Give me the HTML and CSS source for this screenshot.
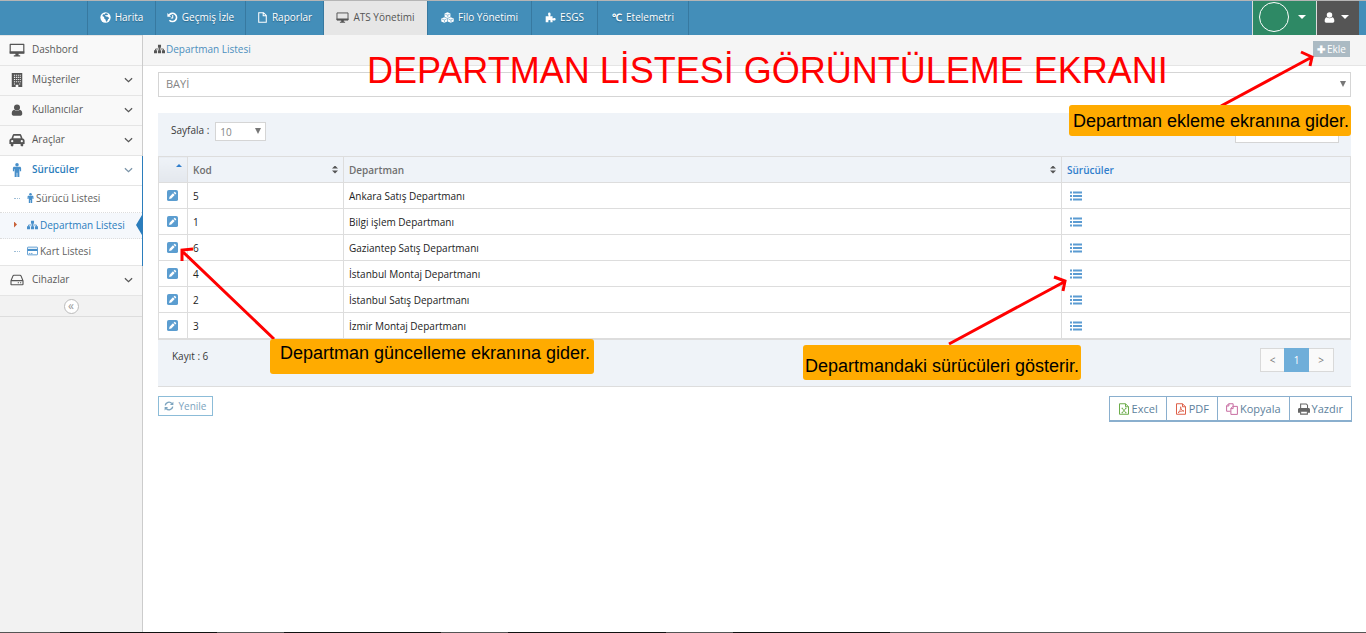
FILE: index.html
```html
<!DOCTYPE html>
<html lang="tr">
<head>
<meta charset="utf-8">
<title>Departman Listesi</title>
<link rel="stylesheet" href="styles.css">
</head>
<body>
<svg class="defs" aria-hidden="true">
  <symbol id="i-globe" viewBox="0 0 16 16"><circle cx="8" cy="8" r="7.5" fill="currentColor"/><path d="M8 1.800l2.600.4 1.200 1.500-1.700 1.200-1.500-.6-1.400 1L9 6.600l2.400.300L13.500 9l-1.800 1.600-1.200 3L8.800 14l-.8-3-1.800-1.600-.2-2-2.600-1.500L4.500 3.200l2 .5z" fill="#3f88b5"/></symbol>
  <symbol id="i-history" viewBox="0 0 16 16"><path d="M3.200 4.200A6 6 0 1 1 3.500 12" fill="none" stroke="currentColor" stroke-width="2.300"/><path d="M.5 1.500V7H6z" fill="currentColor"/><path d="M8.300 4.500v4.200H5.500" fill="none" stroke="currentColor" stroke-width="1.500"/></symbol>
  <symbol id="i-file" viewBox="0 0 16 16"><path d="M2.500 1h7l4 4v10h-11zM9 1v4.500h4.500" fill="none" stroke="currentColor" stroke-width="1.500"/></symbol>
  <symbol id="i-desktop" viewBox="0 0 20 16"><path d="M1.500 1h17v11h-17z" fill="none" stroke="currentColor" stroke-width="1.500" stroke-linejoin="round"/><path d="M1 9.500h18V12H1zM8 12h4v2.500h2V16H6v-1.500h2z" fill="currentColor"/></symbol>
  <symbol id="i-cubes" viewBox="0 0 20 16"><path d="M10 0l4.500 2v5L10 9 5.500 7V2zM5 7.500l4.600 2v4.700L5 16 .4 14.200V9.500zM15 7.500l4.600 2v4.700L15 16l-4.600-1.800V9.500z" fill="currentColor"/><path d="M6.500 3l3.500 1.300L13.500 3M10.500 4.500v3.200M1.500 10.400L5 11.800l3.500-1.400M5.500 12v3M11.500 10.400l3.500 1.400 3.500-1.400M15.500 12v3" fill="none" stroke="#3f88b5" stroke-width=".8"/></symbol>
  <symbol id="i-puzzle" viewBox="0 0 16 16"><path d="M1 6h4.500C4 4 4 .8 6.200.8S8.700 4 7.500 6H11v3.500c2-1.400 4.500-1 4.500 1s-2.500 2.300-4.500 1V15H7.600c1-2 .6-3.300-1.200-3.300S4.400 13 5.200 15H1z" fill="currentColor"/></symbol>
  <symbol id="i-user" viewBox="0 0 16 16"><circle cx="8" cy="4.500" r="4" fill="currentColor"/><path d="M4 7.500c2.500 2 5.500 2 8 0 2.500.8 3 3 3 5.500 0 1.500-.8 2.500-2.300 2.500H3.300C1.800 15.500 1 14.500 1 13c0-2.500.5-4.700 3-5.500z" fill="currentColor"/></symbol>
  <symbol id="i-building" viewBox="0 0 14 16"><path d="M1 0h12v16H8.500v-2.500h-3V16H1z" fill="currentColor"/><path d="M3.500 2.500h8M3.500 5h8M3.500 7.500h8M3.500 10h8M3.500 12.500h1.500M9.500 12.500H11" stroke="#f9f9f9" stroke-width="1.200" stroke-dasharray="1.200 1"/></symbol>
  <symbol id="i-car" viewBox="0 0 20 16"><path d="M3 6l1.500-4C4.900 1 5.500.5 6.700.5h6.600c1.200 0 1.800.5 2.200 1.500L17 6c2 .5 2.500 1.500 2.500 3v4h-1.700v1.500c0 2-3.300 2-3.300 0V13h-9v1.500c0 2-3.300 2-3.300 0V13H.5V9c0-1.500.5-2.500 2.500-3z" fill="currentColor"/><path d="M5.300 5.800h9.400l-1-3H6.300z" fill="#f9f9f9"/><circle cx="4" cy="9.500" r="1.400" fill="#f9f9f9"/><circle cx="16" cy="9.500" r="1.400" fill="#f9f9f9"/></symbol>
  <symbol id="i-male" viewBox="0 0 10 16"><circle cx="5" cy="2" r="2" fill="currentColor"/><path d="M2 4.300h6c1.200 0 1.700.7 1.700 1.700v3.500H8.200V7h-.5v9H5.400v-5h-.8v5H2.300V7h-.5v2.500H.3V6c0-1 .5-1.700 1.700-1.700z" fill="currentColor"/></symbol>
  <symbol id="i-sitemap" viewBox="0 0 18 16"><path d="M6.500 1h5v5h-5zM0 10h5v5H0zM6.500 10h5v5h-5zM13 10h5v5h-5z" fill="currentColor"/><path d="M9 5v6M2.500 11V8h13v3" fill="none" stroke="currentColor" stroke-width="1.400"/></symbol>
  <symbol id="i-card" viewBox="0 0 18 16"><rect x=".7" y="1.700" width="16.600" height="12.600" rx="1" fill="none" stroke="currentColor" stroke-width="1.400"/><path d="M1 4.500h16v3.500H1z" fill="currentColor"/><path d="M3 12h2M6 12h3" stroke="currentColor" stroke-width="1.200"/></symbol>
  <symbol id="i-hdd" viewBox="0 0 18 16"><path d="M1 9l2.500-6.200C3.800 2 4.300 1.700 5 1.700h8c.7 0 1.200.3 1.500 1.100L17 9v4.500c0 .5-.3.800-.8.800H1.800c-.5 0-.8-.3-.8-.8zM1.200 8.800h15.600" fill="none" stroke="currentColor" stroke-width="1.500"/><path d="M10 11.600h1.600M13 11.600h1.600" stroke="currentColor" stroke-width="1.500"/></symbol>
  <symbol id="i-down" viewBox="0 0 10 6"><path d="M1 1l4 3.800L9 1" fill="none" stroke="currentColor" stroke-width="1.400"/></symbol>
  <symbol id="i-edit" viewBox="0 0 12 12"><rect width="12" height="12" rx="2" fill="#5b9dd0"/><path d="M2.300 9.700l.5-2.400 3.700-3.700 1.900 1.900-3.700 3.700zM7.200 2.900l.8-.8q.4-.3.800 0l1.100 1.100q.3.400 0 .8l-.8.8z" fill="#fff"/></symbol>
  <symbol id="i-list" viewBox="0 0 12 10"><path d="M0 1.500h2M0 5h2M0 8.500h2M3 1.500h9M3 5h9M3 8.500h9" stroke="#5b9bd2" stroke-width="1.800"/></symbol>
  <symbol id="i-refresh" viewBox="0 0 16 16"><path d="M2 7a6 6 0 0 1 10.500-3M14 9a6 6 0 0 1-10.500 3" fill="none" stroke="currentColor" stroke-width="2.200"/><path d="M15 1v5.500H9.500zM1 15V9.500h5.500z" fill="currentColor"/></symbol>
  <symbol id="i-xls" viewBox="0 0 14 16"><path d="M1 1h8l4 4v10H1zM9 1v4h4" fill="none" stroke="currentColor" stroke-width="1.300"/><path d="M4.500 7l5 6M9.500 7l-5 6M3.800 7h2M8.300 7h2M3.800 13h2M8.300 13h2" stroke="currentColor" stroke-width="1.200"/></symbol>
  <symbol id="i-pdf" viewBox="0 0 14 16"><path d="M1 1h8l4 4v10H1zM9 1v4h4" fill="none" stroke="currentColor" stroke-width="1.300"/><path d="M3 13c2-1 4-5 3.500-8C7 9 8.500 10.500 11 10.700 8 10.300 5 11.300 3 13z" fill="none" stroke="currentColor" stroke-width="1.100"/></symbol>
  <symbol id="i-copy" viewBox="0 0 16 16"><path d="M6 11H.8V3.800L3.500 1H9.500v3M.8 4H3.800V1M9 4.500h6.200v10.700H6.500V7.200zM6.500 7.500h3V4.500" fill="none" stroke="currentColor" stroke-width="1.300"/></symbol>
  <symbol id="i-print" viewBox="0 0 16 16"><path d="M3.500 7V1.200H11l1.700 1.700V7M3.500 11v3.800h9V11z" fill="none" stroke="currentColor" stroke-width="1.400"/><path d="M2 6.500h12c1.200 0 2 .8 2 2V13h-3v-2.500H3V13H0V8.500c0-1.200.8-2 2-2z" fill="currentColor"/></symbol>
</svg>

<header class="topbar">
  <nav class="tabs" aria-label="Modüller">
    <a class="tab tab-map" href="#"><svg class="ic"><use href="#i-globe"/></svg>Harita</a>
    <a class="tab tab-history" href="#"><svg class="ic"><use href="#i-history"/></svg>Geçmiş İzle</a>
    <a class="tab tab-reports" href="#"><svg class="ic"><use href="#i-file"/></svg>Raporlar</a>
    <a class="tab tab-ats active" href="#"><svg class="ic wide"><use href="#i-desktop"/></svg>ATS Yönetimi</a>
    <a class="tab tab-fleet" href="#"><svg class="ic wide"><use href="#i-cubes"/></svg>Filo Yönetimi</a>
    <a class="tab tab-esgs" href="#"><svg class="ic"><use href="#i-puzzle"/></svg>ESGS</a>
    <a class="tab tab-tele" href="#"><b>℃</b>Etelemetri</a>
  </nav>
  <div class="account">
    <button class="company" type="button" aria-label="Firma"><span class="ring"></span><span class="caret"></span></button>
    <button class="user" type="button" aria-label="Kullanıcı"><svg class="ic"><use href="#i-user"/></svg><span class="caret"></span></button>
  </div>
</header>

<div class="shell">
  <aside class="sidebar">
    <a class="item first" href="#"><svg class="mi"><use href="#i-desktop"/></svg><span>Dashbord</span></a>
    <a class="item" href="#"><svg class="mi"><use href="#i-building"/></svg><span>Müşteriler</span><svg class="dn"><use href="#i-down"/></svg></a>
    <a class="item" href="#"><svg class="mi small"><use href="#i-user"/></svg><span>Kullanıcılar</span><svg class="dn"><use href="#i-down"/></svg></a>
    <a class="item" href="#"><svg class="mi"><use href="#i-car"/></svg><span>Araçlar</span><svg class="dn"><use href="#i-down"/></svg></a>
    <div class="open">
      <a class="item current" href="#"><svg class="mi"><use href="#i-male"/></svg><span>Sürücüler</span><svg class="dn"><use href="#i-down"/></svg></a>
      <a class="sub" href="#"><i class="dots"></i><svg class="man"><use href="#i-male"/></svg>Sürücü Listesi</a>
      <a class="sub selected" href="#"><i class="pointer"></i><svg class="si"><use href="#i-sitemap"/></svg>Departman Listesi</a>
      <a class="sub" href="#"><i class="dots"></i><svg class="si"><use href="#i-card"/></svg>Kart Listesi</a>
    </div>
    <a class="item" href="#"><svg class="mi small"><use href="#i-hdd"/></svg><span>Cihazlar</span><svg class="dn"><use href="#i-down"/></svg></a>
    <div class="collapse"><button type="button" aria-label="Menüyü daralt">«</button></div>
  </aside>

  <main class="main">
    <div class="crumbs">
      <a href="#"><svg class="si"><use href="#i-sitemap"/></svg>Departman Listesi</a>
      <button class="add" type="button"><b>✚</b>Ekle</button>
    </div>
    <div class="content">
      <label class="pick dealer"><select aria-label="Bayi"><option>BAYİ</option></select><span class="tri"></span></label>

      <section class="panel">
        <div class="filter">
          <label for="size">Sayfala :</label>
          <span class="pick size"><select id="size"><option>10</option></select><span class="tri"></span></span>
          <input class="search" type="text" aria-label="Ara">
        </div>
        <table class="grid">
          <colgroup><col class="c-edit"><col class="c-code"><col class="c-name"><col class="c-drivers"></colgroup>
          <thead><tr>
            <th class="sorted"><span class="up"></span></th>
            <th><div class="head">Kod<span class="sort"></span></div></th>
            <th><div class="head">Departman<span class="sort"></span></div></th>
            <th class="link">Sürücüler</th>
          </tr></thead>
          <tbody>
            <tr><td class="tool"><a href="#" aria-label="Düzenle"><svg class="ed"><use href="#i-edit"/></svg></a></td><td>5</td><td>Ankara Satış Departmanı</td><td class="tool"><a href="#" aria-label="Sürücüler"><svg class="ls"><use href="#i-list"/></svg></a></td></tr>
            <tr><td class="tool"><a href="#" aria-label="Düzenle"><svg class="ed"><use href="#i-edit"/></svg></a></td><td>1</td><td>Bilgi işlem Departmanı</td><td class="tool"><a href="#" aria-label="Sürücüler"><svg class="ls"><use href="#i-list"/></svg></a></td></tr>
            <tr><td class="tool"><a href="#" aria-label="Düzenle"><svg class="ed"><use href="#i-edit"/></svg></a></td><td>6</td><td>Gaziantep Satış Departmanı</td><td class="tool"><a href="#" aria-label="Sürücüler"><svg class="ls"><use href="#i-list"/></svg></a></td></tr>
            <tr><td class="tool"><a href="#" aria-label="Düzenle"><svg class="ed"><use href="#i-edit"/></svg></a></td><td>4</td><td>İstanbul Montaj Departmanı</td><td class="tool"><a href="#" aria-label="Sürücüler"><svg class="ls"><use href="#i-list"/></svg></a></td></tr>
            <tr><td class="tool"><a href="#" aria-label="Düzenle"><svg class="ed"><use href="#i-edit"/></svg></a></td><td>2</td><td>İstanbul Satış Departmanı</td><td class="tool"><a href="#" aria-label="Sürücüler"><svg class="ls"><use href="#i-list"/></svg></a></td></tr>
            <tr><td class="tool"><a href="#" aria-label="Düzenle"><svg class="ed"><use href="#i-edit"/></svg></a></td><td>3</td><td>İzmir Montaj Departmanı</td><td class="tool"><a href="#" aria-label="Sürücüler"><svg class="ls"><use href="#i-list"/></svg></a></td></tr>
          </tbody>
        </table>
        <div class="foot">
          <span>Kayıt : 6</span>
          <div class="pager"><button type="button">&lt;</button><button class="on" type="button">1</button><button type="button">&gt;</button></div>
        </div>
      </section>

      <div class="actions">
        <button class="refresh" type="button"><svg class="ai"><use href="#i-refresh"/></svg>Yenile</button>
        <div class="export">
          <button type="button"><svg class="ai green"><use href="#i-xls"/></svg>Excel</button>
          <button type="button"><svg class="ai red"><use href="#i-pdf"/></svg>PDF</button>
          <button type="button"><svg class="ai pink"><use href="#i-copy"/></svg>Kopyala</button>
          <button type="button"><svg class="ai grey"><use href="#i-print"/></svg>Yazdır</button>
        </div>
      </div>
    </div>
  </main>
</div>
<div class="taskbar"></div>

<h1 class="title">DEPARTMAN LİSTESİ GÖRÜNTÜLEME EKRANI</h1>
<svg class="arrow arrow-add" viewBox="0 0 110 60"><path d="M5 58L96 9M85 4L96 9L94 18"/></svg>
<svg class="arrow arrow-edit" viewBox="0 0 110 100"><path d="M100 94L8 6M19 4L8 5L8 16"/></svg>
<svg class="arrow arrow-list" viewBox="0 0 130 80"><path d="M9 70L124 8M114 3L125 7L123 17"/></svg>
<p class="note note-add">Departman ekleme ekranına gider.</p>
<p class="note note-edit">Departman güncelleme ekranına gider.</p>
<p class="note note-list">Departmandaki sürücüleri gösterir.</p>
</body>
</html>
```
FILE: styles.css
```css
* { box-sizing: border-box; }
body {
  margin: 0;
  min-height: 100vh;
  display: flex;
  flex-direction: column;
  position: relative;
  background: #fff;
  color: #393939;
  font: 10px/16px "Open Sans", sans-serif;
}
a { color: inherit; text-decoration: none; }
button, select, input { font: inherit; color: inherit; margin: 0; border-radius: 0; }
button { padding: 0; border: 0; cursor: pointer; }
svg { flex: none; display: block; }
.defs { position: absolute; width: 0; height: 0; }

.topbar {
  display: flex;
  justify-content: space-between;
  height: 35px;
  padding-right: 7px;
  border-top: 1px solid #b5b5b5;
  background: #438eb9;
}
.tabs { display: flex; margin-left: 87px; border-right: 1px solid #3779a0; }
.tab {
  display: flex;
  align-items: center;
  justify-content: center;
  gap: 4px;
  padding-bottom: 2px;
  border-left: 1px solid #3779a0;
  color: #fff;
  font-weight: 500;
  text-shadow: 0 1px 1px #2c6485;
}
.tab.active { background: #e6e6e6; color: #555; text-shadow: none; font-weight: 400; }
.tab-map { width: 68px; }
.tab-history { width: 90px; }
.tab-reports { width: 78px; }
.tab-ats { width: 104px; }
.tab-fleet { width: 104px; }
.tab-esgs { width: 66px; }
.tab-tele { width: 91px; }
.ic { width: 11px; height: 11px; }
.ic.wide { width: 13px; }
.account { display: flex; }
.account button { display: flex; align-items: center; border-left: 1px solid #ddd; color: #fff; }
.company { width: 64px; padding: 0 0 2px 6px; gap: 9px; background: #2e8965; }
.user { width: 43px; padding: 0 0 2px 7px; gap: 6px; background: #555; }
.ring { width: 30px; height: 30px; border: 1px solid #fff; border-radius: 50%; }
.caret { border: 4px solid transparent; border-top-color: #fff; border-bottom: 0; }

.shell { display: flex; flex: 1; }
.sidebar { width: 143px; border-right: 1px solid #ccc; background: #f2f2f2; color: #585858; }
.item {
  display: flex;
  align-items: center;
  height: 30px;
  padding: 0 9px 2px;
  border-bottom: 1px solid #e5e5e5;
  background: #f9f9f9;
}
.first { height: 31px; border-top: 1px solid #e5e5e5; }
.item span { flex: 1; padding: 0 0 2px 7px; }
.mi { width: 16px; height: 14px; color: #555; }
.mi.small { height: 12px; }
.dn { width: 9px; height: 6px; }
.open { border-right: 1px solid #2b7dbc; margin-right: -1px; background: #fff; }
.item.current { background: #fff; color: #2b7dbc; font-weight: 600; }
.current .mi { color: #478fca; }
.current .dn { color: #7b94a8; }
.sub {
  position: relative;
  display: flex;
  align-items: center;
  gap: 2px;
  height: 27px;
  padding: 0 0 2px 14px;
  border-bottom: 1px dotted #ddd;
  color: #616161;
}
.sub:last-child { border-bottom: 1px solid #e5e5e5; }
.sub svg { color: #478fca; }
.sub .man { width: 7px; height: 10px; }
.selected { height: 26px; background: #f5f8fc; color: #2b7dbc; }
.selected::after {
  content: "";
  position: absolute;
  right: 0;
  border: 10px solid transparent;
  border-left: 0;
  border-right: 6px solid #2b7dbc;
}
.dots { width: 6px; margin-right: 5px; border-top: 1px dotted #9dbdd6; }
.pointer { width: 11px; height: 6px; background: #c86139; clip-path: polygon(0 0, 3px 50%, 0 100%); }
.si { width: 11px; height: 10px; }
.collapse { display: flex; justify-content: center; align-items: center; height: 21px; border-bottom: 1px solid #ddd; }
.collapse button { width: 15px; height: 15px; border: 1px solid #bbb; border-radius: 50%; background: #fff; color: #999; line-height: 10px; font-size: 12px; }

.main { flex: 1; min-width: 0; }
.crumbs {
  display: flex;
  justify-content: space-between;
  align-items: center;
  height: 31px;
  padding: 0 16px 2px 11px;
  border-bottom: 1px solid #e5e5e5;
  background: #f5f5f5;
}
.crumbs a { display: flex; align-items: center; gap: 1px; color: #4c8fbd; }
.crumbs .si { color: #555; }
.add { width: 37px; height: 16px; background: #abbac3; color: #fff; font-size: 10px; line-height: 16px; }
.add b { margin-right: 2px; }
.content { padding: 6px 15px; }
.pick { position: relative; display: block; color: #858585; }
.pick select { display: block; width: 100%; height: 100%; border: 1px solid #d5d5d5; background: #fff; appearance: none; }
.pick .tri { position: absolute; right: 5px; top: 6px; border: 3px solid transparent; border-top: 6px solid #777; border-bottom: 0; pointer-events: none; }
.dealer { height: 25px; font-size: 11px; }
.dealer select { padding: 0 7px 2px; }
.dealer .tri { top: 9px; }

.panel { margin-top: 16px; border-bottom: 1px solid #ddd; background: #eff3f8; }
.filter { display: flex; align-items: flex-start; height: 43px; padding: 9px 12px 0 13px; }
.filter label { padding-right: 6px; }
.size { width: 51px; height: 19px; }
.size select { padding: 0 4px; }
.search { width: 104px; height: 21px; margin-left: auto; border: 1px solid #d5d5d5; background: #fff; }
.grid { width: 100%; border-collapse: collapse; table-layout: fixed; background: #fff; }
.c-edit { width: 29px; }
.c-code { width: 156px; }
.c-name { width: 718px; }
.grid th, .grid td { height: 26px; padding: 0 5px; border: 1px solid #ddd; text-align: left; }
.grid td { color: #222; }
.grid .tool { padding: 0 8px; }
.tool a { display: block; }
.grid th { background: #eff3f8; color: #707070; font-weight: 600; }
.grid th.sorted { background: linear-gradient(#eff3f8, #e3e7ed); }
.grid th.link { color: #307ecc; }
.head { display: flex; justify-content: space-between; align-items: center; }
.up { display: block; width: 6px; margin: 0 0 8px auto; border: 3px solid transparent; border-top: 0; border-bottom-color: #307ecc; }
.sort { width: 6px; height: 8px; background: #555; clip-path: polygon(50% 0, 100% 38%, 0 38%, 0 62%, 100% 62%, 50% 100%, 0 62%, 0 38%); }
.ed { width: 11px; height: 11px; }
.ls { width: 12px; height: 10px; }
.foot { display: flex; justify-content: space-between; height: 47px; padding: 8px 17px 0 14px; border-top: 1px solid #ddd; }
.pager { display: flex; }
.pager button { width: 25px; height: 24px; border: 1px solid #d9d9d9; background: #fafafa; color: #777; }
.pager button:first-child { border-right: 0; width: 24px; }
.pager button:last-child { border-left: 0; }
.pager .on { border-color: #6faed9; background: #6faed9; color: #fff; }

.actions { display: flex; justify-content: space-between; align-items: flex-start; margin: 9px -1px 0 0; }
.actions button { display: flex; align-items: center; justify-content: center; background: #fff; }
.refresh { width: 55px; height: 20px; gap: 4px; border: 1px solid #8cbcd8; color: #7ba3be; }
.ai { width: 12px; height: 12px; }
.refresh .ai { width: 10px; height: 10px; }
.export { display: flex; border: 1px solid #8aafce; border-bottom-width: 2px; color: #5d7f9c; font-size: 11px; }
.export button { height: 23px; padding: 0 8px; gap: 2px; }
.export button + button { border-left: 1px solid #8aafce; }
.green { color: #69aa46; }
.red { color: #dd5a43; }
.pink { color: #c6699f; }
.grey { color: #666; }
.taskbar { height: 1px; background: linear-gradient(90deg, #555 60px, #111 60px 217px, #555 217px 284px, #111 284px 441px, #555 441px 508px, #111 508px 666px, #555 666px 733px, #111 733px 890px, #555 890px); }

/* Annotations laid over the screen */
.title { position: absolute; left: 367px; top: 50px; margin: 0; color: #f00; font: 36px/42px "Liberation Sans", Arial, sans-serif; white-space: nowrap; }
.note { position: absolute; margin: 0; border-radius: 3px; background: #ffab00; color: #000; font: 18px/32px "Liberation Sans", Arial, sans-serif; white-space: nowrap; text-align: center; }
.note-add { right: 15px; top: 105px; width: 282px; height: 31px; padding-left: 2px; }
.note-edit { left: 270px; top: 339px; width: 324px; height: 35px; padding-left: 6px; line-height: 28px; }
.note-list { left: 803px; top: 345px; width: 278px; height: 35px; line-height: 42px; }
.arrow { position: absolute; fill: none; stroke: #f00; stroke-width: 3px; }
.arrow-add { right: 40px; top: 48px; width: 110px; height: 60px; }
.arrow-edit { left: 174px; top: 245px; width: 110px; height: 100px; }
.arrow-list { left: 940px; top: 274px; width: 130px; height: 80px; }
```
